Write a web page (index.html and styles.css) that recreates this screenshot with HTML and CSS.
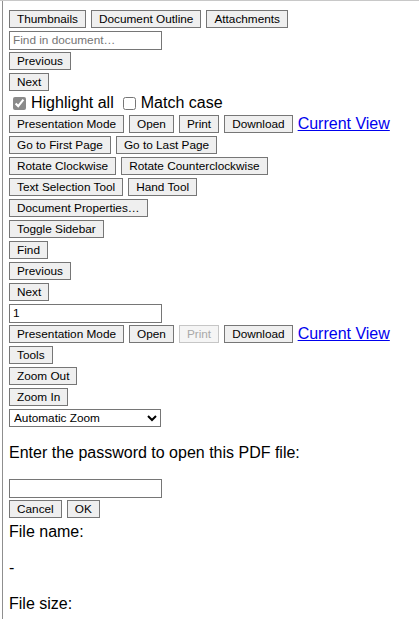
FILE: index.html
```html
<!DOCTYPE html>
<html>
<head lang="en">
	<meta charset="utf-8" name="viewport" content="width=device-width, initial-scale=1.0">
	<title>PDF Viewer</title>
	<link rel="stylesheet" href="styles.css">
</head>
<body>

	<div class="frame">
		<div class="row">
			<button>Thumbnails</button>
			<button>Document Outline</button>
			<button>Attachments</button>
		</div>
		<div class="row"><input type="text" class="field" placeholder="Find in document…"></div>
		<div class="row"><button>Previous</button></div>
		<div class="row"><button>Next</button></div>
		<div class="row opts">
			<label><input type="checkbox" checked> Highlight all</label>
			<label><input type="checkbox"> Match case</label>
		</div>
		<div class="row">
			<button>Presentation Mode</button>
			<button>Open</button>
			<button>Print</button>
			<button>Download</button>
			<a href="#">Current View</a>
		</div>
		<div class="row">
			<button>Go to First Page</button>
			<button>Go to Last Page</button>
		</div>
		<div class="row">
			<button>Rotate Clockwise</button>
			<button>Rotate Counterclockwise</button>
		</div>
		<div class="row">
			<button>Text Selection Tool</button>
			<button>Hand Tool</button>
		</div>
		<div class="row"><button>Document Properties…</button></div>
		<div class="row"><button>Toggle Sidebar</button></div>
		<div class="row"><button>Find</button></div>
		<div class="row"><button>Previous</button></div>
		<div class="row"><button>Next</button></div>
		<div class="row"><input type="text" class="field" value="1"></div>
		<div class="row">
			<button>Presentation Mode</button>
			<button>Open</button>
			<button disabled>Print</button>
			<button>Download</button>
			<a href="#">Current View</a>
		</div>
		<div class="row"><button>Tools</button></div>
		<div class="row"><button>Zoom Out</button></div>
		<div class="row"><button>Zoom In</button></div>
		<div class="row">
			<select class="zoom">
				<option>Automatic Zoom</option>
				<option>Actual Size</option>
				<option>Page Fit</option>
				<option>Page Width</option>
			</select>
		</div>

		<p class="prompt">Enter the password to open this PDF file:</p>
		<div class="row"><input type="password" class="field"></div>
		<div class="row">
			<button>Cancel</button>
			<button>OK</button>
		</div>

		<p class="info">File name:</p>
		<p class="info">-</p>
		<p class="info">File size:</p>
	</div>

</body>
</html>
```

FILE: styles.css
```css
* {
	box-sizing: border-box;
}

html, body {
	margin: 0;
	padding: 0;
}

body {
	font-family: "Liberation Sans", Arial, sans-serif;
	font-size: 16px;
	color: #000;
	border-top: 1px solid #c8c8c8;
}

.frame {
	margin-left: 2px;
	border-left: 1px solid #8f8f8f;
	padding: 9px 0 0 6px;
	min-height: calc(100vh - 1px);
}

.row {
	display: flex;
	align-items: center;
	gap: 5px;
	height: 18px;
	margin-bottom: 3px;
}

button {
	font-family: "Liberation Sans", Arial, sans-serif;
	font-size: 11.8px;
	height: 18px;
	padding: 0 7px;
	line-height: 16px;
	background: #efefef;
	color: #000;
	border: 1px solid #767676;
	border-radius: 0;
}

button:disabled {
	color: #a9a9a9;
	border-color: #c6c6c6;
	background: #f5f5f5;
}

.field {
	font-family: "Liberation Sans", Arial, sans-serif;
	font-size: 11.8px;
	width: 153px;
	height: 19px;
	padding: 0 3px;
	border: 1px solid #767676;
	border-radius: 0;
	background: #fff;
}

.field::placeholder {
	color: #757575;
}

a {
	color: #0000ee;
	text-decoration: underline;
	font-size: 16px;
	line-height: 18px;
}

.opts {
	gap: 5px;
}

.opts label {
	display: flex;
	align-items: center;
	line-height: 18px;
}

.opts input {
	width: 13px;
	height: 13px;
	margin: 0 5px 0 4px;
	accent-color: #8a8a8a;
}

.zoom {
	font-family: "Liberation Sans", Arial, sans-serif;
	font-size: 11.8px;
	width: 152px;
	height: 18px;
	padding: 0;
	border: 1px solid #767676;
	border-radius: 0;
	background: #fff;
	color: #000;
}

.prompt {
	margin: 15px 0 16px;
	line-height: 21px;
}

.info {
	margin: 0 0 15px;
	line-height: 21px;
}
```
